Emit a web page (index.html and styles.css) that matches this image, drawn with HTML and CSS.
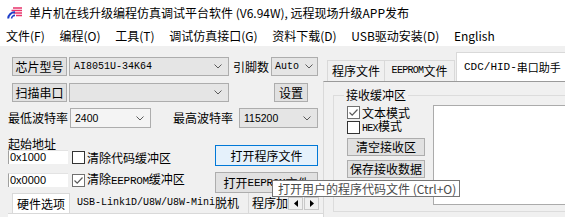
FILE: index.html
```html
<!DOCTYPE html>
<html lang="zh-CN">
<head>
<meta charset="utf-8">
<title>单片机在线升级编程仿真调试平台软件</title>
<link rel="stylesheet" href="styles.css">
</head>
<body>
<div class="win">
  <div class="titlebar">
    <svg class="appicon" viewBox="0 0 16 12" width="16" height="12">
      <path d="M6 1 H15 M4.5 3.5 H15 M6.5 6 H15 M9 8.5 H15" stroke="#e8336b" stroke-width="1.7" fill="none"/>
      <path d="M1.2 11.5 A6.5 6.5 0 0 1 8 5.2" stroke="#1f3fc9" stroke-width="2" fill="none"/>
      <path d="M4.6 11.5 A3.2 3.2 0 0 1 8 8.4" stroke="#1f3fc9" stroke-width="1.6" fill="none"/>
    </svg>
    <span class="title">单片机在线升级编程仿真调试平台软件 (V6.94W), 远程现场升级APP发布</span>
  </div>
  <div class="menubar">
    <span>文件(F)</span>
    <span>编程(O)</span>
    <span>工具(T)</span>
    <span>调试仿真接口(G)</span>
    <span>资料下载(D)</span>
    <span>USB驱动安装(D)</span>
    <span>English</span>
  </div>
  <div class="main">
    <div class="left">
      <div class="row r1">
        <div class="btn b-side">芯片型号</div>
        <div class="combo c-wide"><span class="mono">AI8051U-34K64</span><svg class="chev" viewBox="0 0 8 5" width="8" height="5"><polyline points="0.5,0.5 4,4 7.5,0.5"/></svg></div>
        <span class="lbl l-pin">引脚数</span>
        <div class="combo c-auto"><span class="mono">Auto</span><svg class="chev" viewBox="0 0 8 5" width="8" height="5"><polyline points="0.5,0.5 4,4 7.5,0.5"/></svg></div>
      </div>
      <div class="row r2">
        <div class="btn b-side">扫描串口</div>
        <div class="combo c-wide"><span></span><svg class="chev" viewBox="0 0 8 5" width="8" height="5"><polyline points="0.5,0.5 4,4 7.5,0.5"/></svg></div>
        <div class="btn b-set">设置</div>
      </div>
      <div class="row r3">
        <span class="lbl l-baud">最低波特率</span>
        <div class="combo c-low"><span class="num">2400</span><svg class="chev" viewBox="0 0 8 5" width="8" height="5"><polyline points="0.5,0.5 4,4 7.5,0.5"/></svg></div>
        <span class="lbl l-baud l-high">最高波特率</span>
        <div class="combo c-high"><span class="num">115200</span><svg class="chev" viewBox="0 0 8 5" width="8" height="5"><polyline points="0.5,0.5 4,4 7.5,0.5"/></svg></div>
      </div>
      <div class="lower">
        <div class="col-a">
          <div class="lbl-start">起始地址</div>
          <div class="irow">
            <div class="addr">0x1000</div>
            <span class="chk"></span>
            <span class="chk-lbl">清除代码缓冲区</span>
          </div>
          <div class="irow irow2">
            <div class="addr">0x0000</div>
            <span class="chk checked"><svg viewBox="0 0 11 11" width="11" height="11"><polyline points="1.5,5.5 4.2,8.2 9.5,2.5"/></svg></span>
            <span class="chk-lbl">清除<span class="mono-t">EEPROM</span>缓冲区</span>
          </div>
        </div>
        <div class="col-b">
          <div class="btn b-open focus">打开程序文件</div>
          <div class="btn b-open b-eep">打开<span class="mono-t">EEPROM</span>文件</div>
        </div>
      </div>
      <div class="btabs">
        <div class="btab active">硬件选项</div>
        <div class="btab b2"><span class="mono">USB-Link1D/U8W/U8W-Mini</span>脱机</div>
        <div class="btab b3">程序加</div>
        <div class="arrows">
          <span class="arr"><svg viewBox="0 0 4 7" width="4" height="7"><polygon points="4,0 0,3.5 4,7"/></svg></span>
          <span class="arr"><svg viewBox="0 0 4 7" width="4" height="7"><polygon points="0,0 4,3.5 0,7"/></svg></span>
        </div>
      </div>
      <div class="bpane"></div>
    </div>
    <div class="right">
      <div class="rtabs">
        <div class="rtab t1">程序文件</div>
        <div class="rtab t2"><span class="mono-s">EEPROM</span>文件</div>
        <div class="rtab t3 active"><span class="mono11">CDC/HID-</span>串口助手</div>
      </div>
      <div class="rpane">
        <fieldset class="group">
          <legend>接收缓冲区</legend>
          <div class="gbody">
            <div class="gcol">
              <div class="crow">
                <span class="chk checked"><svg viewBox="0 0 11 11" width="11" height="11"><polyline points="1.5,5.5 4.2,8.2 9.5,2.5"/></svg></span>
                <span class="chk-lbl">文本模式</span>
              </div>
              <div class="crow crow2">
                <span class="chk"></span>
                <span class="chk-lbl"><span class="mono-s">HEX</span>模式</span>
              </div>
              <div class="btn b-g">清空接收区</div>
              <div class="btn b-g b-g2">保存接收数据</div>
            </div>
            <div class="rx"></div>
          </div>
        </fieldset>
      </div>
    </div>
  </div>
  <div class="tooltip">打开用户的程序代码文件 (Ctrl+O)</div>
</div>
</body>
</html>
```

FILE: styles.css
```css
* { box-sizing: border-box; margin: 0; padding: 0; }
html, body { width: 565px; height: 217px; overflow: hidden; }
body {
  font-family: "Noto Sans CJK SC", "Noto Sans", sans-serif;
  font-size: 12px;
  color: #000;
  background: #f0f0f0;
}
.win { position: relative; width: 565px; height: 217px; overflow: hidden; }

.titlebar {
  height: 26px; background: #fff;
  display: flex; align-items: center; padding-left: 7px;
}
.appicon { flex: none; }
.title { margin-left: 6px; line-height: 14px; white-space: nowrap; }

.menubar {
  height: 20px; background: #fff;
  display: flex; align-items: center; gap: 14.7px;
  padding-left: 6px; line-height: 14px; white-space: nowrap;
}

.main { display: flex; height: 171px; }
.left { width: 323px; flex: none; padding: 11px 0 0 8px; }

.row { display: flex; align-items: center; }
.r1, .r2 { margin-left: 4px; height: 19px; }
.r2 { margin-top: 7px; }
.r3 { margin-top: 6px; height: 20px; }

.btn {
  display: flex; align-items: center; justify-content: center;
  background: #e1e1e1; border: 1px solid #adadad;
  line-height: 14px; white-space: nowrap; flex: none;
}
.b-side { width: 55px; height: 19px; }
.b-set { width: 34px; height: 19px; margin-left: 45px; }

.combo {
  display: flex; align-items: center; justify-content: space-between;
  height: 19px; background: #e5e5e5; border: 1px solid #adadad;
  padding: 0 6px 0 4px; flex: none;
}
.combo .chev { flex: none; }
.chev polyline { fill: none; stroke: #5a5a5a; stroke-width: 1; }
.c-wide { width: 160px; margin-left: 2px; }
.c-auto { width: 47px; margin-left: 1px; padding-left: 3px; padding-right: 4px; }
.c-low { width: 81px; margin-left: 2px; height: 20px; background: #f4f4f4; }
.c-high { width: 79px; margin-left: 6px; height: 20px; }

.mono { font-family: "Liberation Mono", monospace; font-size: 10px; line-height: 12px; }
.mono-s { font-family: "Liberation Mono", monospace; font-size: 10px; letter-spacing: -0.7px; }
.mono-t { font-family: "Liberation Mono", monospace; font-size: 11px; letter-spacing: -0.3px; }
.mono11 { font-family: "Liberation Mono", monospace; font-size: 11px; }
.num { font-family: "Liberation Sans", sans-serif; font-size: 10.5px; line-height: 12px; }

.lbl { line-height: 14px; white-space: nowrap; flex: none; }
.l-pin { margin-left: 4px; width: 37px; }
.l-baud { width: 60px; }
.l-high { margin-left: 22px; }

.lower { display: flex; height: 56px; margin-top: 9px; }
.col-a { width: 207px; flex: none; }
.lbl-start { height: 13px; line-height: 13px; }
.irow { display: flex; align-items: center; height: 14px; }
.irow2 { margin-top: 9px; }
.addr {
  width: 60px; height: 14px; background: #fff;
  border-left: 1px solid #a0a0a0; border-top: 1px solid #e3e3e3;
  font-family: "Liberation Sans", sans-serif; font-size: 11px; line-height: 12px;
  padding-left: 1px; flex: none;
}
.chk {
  width: 13px; height: 13px; border: 1px solid #333; background: #fff;
  display: flex; align-items: center; justify-content: center; flex: none;
  margin-left: 4px;
}
.chk.checked { border-color: #707070; }
.chk svg polyline { fill: none; stroke: #5a5a5a; stroke-width: 1.2; }
.chk-lbl { margin-left: 2px; line-height: 13px; white-space: nowrap; }

.col-b { padding-top: 8px; width: 103px; flex: none; }
.b-open { width: 103px; height: 21px; }
.b-eep { margin-top: 6px; }
.btn.focus { background: #e5f1fb; border-color: #0078d7; }

.btabs { display: flex; height: 20px; margin-left: 4px; align-items: stretch; }
.btab { display: flex; align-items: center; white-space: nowrap; line-height: 14px; }
.btab.active {
  width: 58px; justify-content: center; background: #fff;
  border: 1px solid #d9d9d9; border-bottom: none;
}
.b2 { padding: 0 9px 0 7px; border-right: 1px solid #d9d9d9; }
.b3 { padding-left: 3px; width: 39px; flex: none; }
.arrows { display: flex; align-items: center; gap: 1px; }
.arr {
  width: 15px; height: 13px; background: #f0f0f0; border: 1px solid #c8c8c8;
  display: flex; align-items: center; justify-content: center;
}
.arr polygon { fill: #000; }
.bpane { height: 6px; background: #fff; border-top: 1px solid #d9d9d9; }

.right { flex: 1; min-width: 0; display: flex; flex-direction: column; }
.rtabs { height: 35px; display: flex; align-items: flex-end; padding-left: 4px; }
.rtab {
  height: 21px; display: flex; align-items: center; white-space: nowrap;
  border: 1px solid #d9d9d9; border-bottom: none; background: #f0f0f0;
  line-height: 14px; flex: none;
}
.t1 { width: 58px; justify-content: center; }
.t2 { width: 70px; justify-content: center; border-left: none; }
.t3 { height: 29px; width: 120px; padding-left: 7px; background: #fff; margin-left: 1px; font-size: 11px; }
.rpane {
  flex: 1; border-top: 1px solid #9a9a9a; border-left: 1px solid #d9d9d9;
  background: #f0f0f0; padding-left: 9px;
}
.group {
  border: 1px solid #dcdcdc; border-right: none;
  margin-top: 6px; height: 124px; padding: 0;
  min-width: 0;
}
.group legend { margin-left: 10px; padding: 0 2px; line-height: 14px; }
.gbody { display: flex; }
.gcol { width: 99px; padding-left: 13px; flex: none; }
.crow { display: flex; align-items: center; height: 14px; }
.crow:first-child { margin-top: 3px; }
.crow2 { margin-top: 1px; }
.crow .chk { margin-left: 0; }
.b-g { width: 78px; height: 18px; margin-top: 4px; }
.b-g2 { margin-top: 4px; }
.rx { flex: 1; height: 100px; margin-top: 3px; background: #fff; border: 1px solid #ababab; border-right: none; }

.tooltip {
  position: absolute; left: 272px; top: 180px;
  width: 188px; height: 17px; background: #fff;
  border: 1px solid #767676; color: #4a4a4a;
  line-height: 15px; padding-left: 5px; white-space: nowrap;
}
```
